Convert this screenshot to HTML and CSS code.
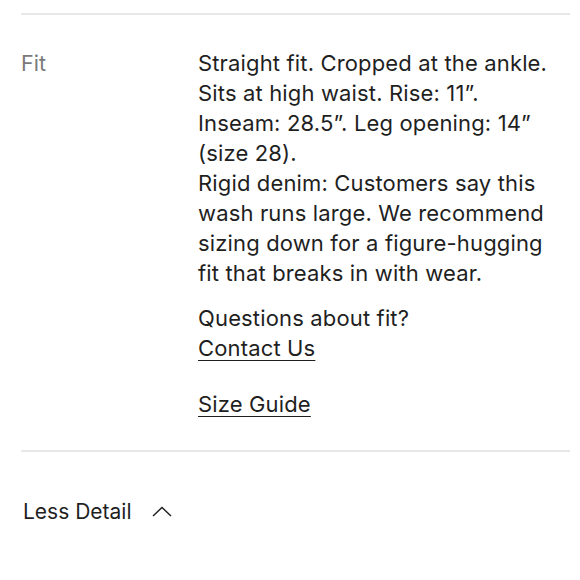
FILE: index.html
```html
<!DOCTYPE html>
<html>
<head>
<meta charset="utf-8">
<link rel="stylesheet" href="styles.css">
</head>
<body>
<div class="page">
  <hr class="divider top">
  <div class="row">
    <div class="label">Fit</div>
    <div class="value">
      <p class="desc">Straight fit. Cropped at the ankle.<br>Sits at high waist. Rise: 11”.<br>Inseam: 28.5”. Leg opening: 14”<br>(size 28).<br>Rigid denim: Customers say this<br>wash runs large. We recommend<br>sizing down for a figure-hugging<br>fit that breaks in with wear.</p>
      <p class="question">Questions about fit?<br><a href="#" class="link">Contact Us</a></p>
      <p class="guide"><a href="#" class="link">Size Guide</a></p>
    </div>
  </div>
  <hr class="divider bottom">
  <button class="toggle">Less Detail
    <svg class="chev" width="20" height="11" viewBox="0 0 20 11"><path d="M1 10 L10 1.5 L19 10" fill="none" stroke="#222" stroke-width="1.5"/></svg>
  </button>
</div>
</body>
</html>
```
FILE: styles.css
```css
html, body {
  margin: 0;
  padding: 0;
  background: #fff;
}
.page {
  padding: 13px 10px 0 21px;
  font-family: Inter, "Noto Sans", sans-serif;
  color: #1f1f1f;
  font-size: 21px;
  line-height: 30px;
}
.divider {
  border: 0;
  border-top: 2px solid #e8e8e8;
  margin: 0;
}
.row {
  display: grid;
  grid-template-columns: 177px 1fr;
  padding-top: 33px;
  padding-bottom: 31px;
}
.label {
  color: #7a7a7a;
  font-size: 21.5px;
}
.value {
  font-size: 22px;
  letter-spacing: 0.15px;
}
.value p {
  margin: 0;
}
.question {
  margin-top: 15px !important;
}
.guide {
  margin-top: 26px !important;
}
.link {
  color: #1f1f1f;
  text-decoration: underline;
  text-underline-offset: 4px;
  text-decoration-thickness: 1px;
}
.toggle {
  display: flex;
  align-items: center;
  gap: 20px;
  margin-top: 45px;
  padding: 0 0 0 2px;
  border: 0;
  background: none;
  font: inherit;
  color: #1f1f1f;
  line-height: 30px;
}
.chev {
  display: block;
  margin-top: -2px;
}
```
